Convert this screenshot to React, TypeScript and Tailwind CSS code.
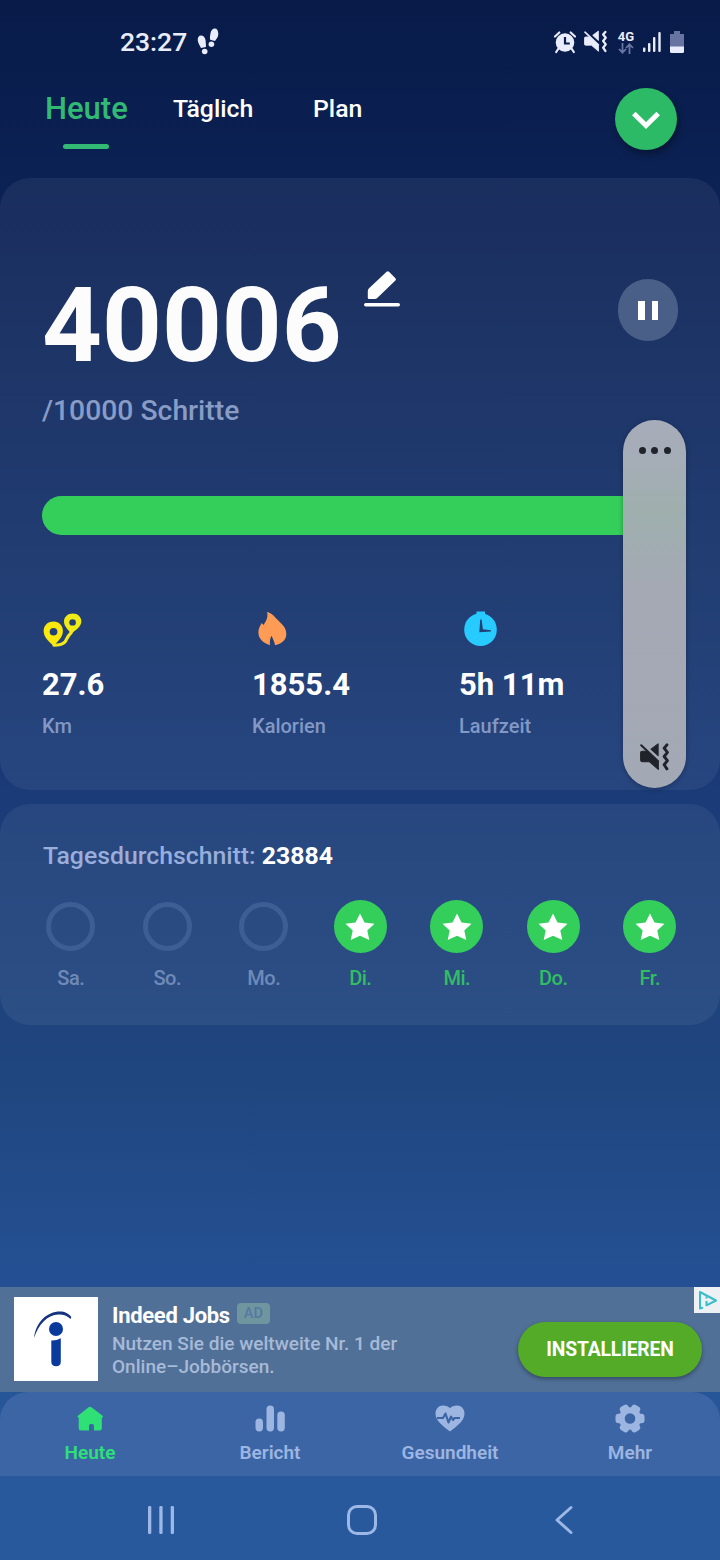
import React from 'react';

const days = [
  { label: 'Sa.', done: false },
  { label: 'So.', done: false },
  { label: 'Mo.', done: false },
  { label: 'Di.', done: true },
  { label: 'Mi.', done: true },
  { label: 'Do.', done: true },
  { label: 'Fr.', done: true },
];

// speaker with slash + vibration line, used in the status bar and the volume panel
const MuteVibrateIcon = ({ className }: { className: string }) => (
  <svg viewBox="0 0 28 27" className={className} fill="currentColor">
    <path d="M17.500 .8v11.400L10.600 6z" stroke="currentColor" strokeLinejoin="round" />
    <path d="M2 8h4.500L17.700 18.500V25.500L9 18H2Q.6 18 .6 16.500v-7Q.6 8 2 8z" stroke="currentColor" strokeLinejoin="round" />
    <path d="M1.200 2.200L17.500 17.500" stroke="currentColor" strokeWidth="2" strokeLinecap="round" />
    <path d="M26 1.800L23.300 5l3.200 4-3.200 4 3.200 4-3.200 4L26 25" fill="none" stroke="currentColor" strokeWidth="2.800" strokeLinecap="round" strokeLinejoin="round" />
  </svg>
);

const RouteIcon = () => (
  <svg width="44" height="40" viewBox="0 0 40 40" preserveAspectRatio="none">
    <path fill="#fbe80d" fillRule="evenodd" d="M10.500 9.500c-5.500 0-9 4.200-9 9.500 0 6.500 5 10.500 9 15 4-4.500 8.500-9 8.500-15 0-5.300-3.500-9.500-8.500-9.500zm0 6.500a3.500 3.800 0 1 1 0 7.600 3.500 3.800 0 0 1 0-7.600z" />
    <path fill="#f0ea16" fillRule="evenodd" d="M28 1.500c-4.500 0-8 3.500-8 8 0 5.500 4.500 8.500 6.500 12.500 4-4 9.300-7 9.300-12.700 0-4.300-3.300-7.800-7.800-7.800zm-.2 5.700a3 3.200 0 1 1 0 6.400 3 3.200 0 0 1 0-6.400z" />
    <path d="M11 33.200c4.500 0 8-1 10-3.500 1.500-2 1.500-5 5.500-9" fill="none" stroke="#f3ea18" strokeWidth="3" strokeLinecap="round" />
  </svg>
);

const FlameIcon = () => (
  <svg width="29" height="36" viewBox="0 0 29 36" fill="#fe9b54">
    <path d="M9.200 .7C15 3 16.800 5.800 19 8.300c1 1.200 2 2 3.200 3.200 3.500 3.300 6.100 6.300 6.100 11.500 0 6-4.300 9.700-11.300 11.300-.2-3.300-2-5.800-3.500-9.500-1.500 3.200-2 5.800-1.500 9.400C5.500 32.200.4 28 .4 21.500c0-3.800 1.500-6.300 3.300-9.500.8 1 1.500 1.500 2.300 1.900C6 11.500 10.500 9 9.200 .7z" />
  </svg>
);

const WatchIcon = () => (
  <svg width="34" height="36" viewBox="0 0 34 36">
    <path fill="#28cbff" d="M12.500 .5h8.500v5h-8.500z" />
    <ellipse cx="16.500" cy="18.700" rx="16.300" ry="16.400" fill="#28cbff" />
    <path fill="#214077" d="M16.200 8.500h1.400l1.300 9.800 8 1v1.200L15.300 21.200z" />
  </svg>
);

const stats = [
  { icon: RouteIcon, value: '27.6', label: 'Km', width: 'w-[210px]', iconPad: 'pt-[1px]' },
  { icon: FlameIcon, value: '1855.4', label: 'Kalorien', width: 'w-[207px]', iconPad: 'pl-[6px]' },
  { icon: WatchIcon, value: '5h 11m', label: 'Laufzeit', width: 'w-[140px]', iconPad: 'pl-[5px]' },
];

const StatusBar = () => (
  <div className="flex h-[84px] items-center pb-px pl-[120px] pr-[35px] text-[#e9edfb]">
    <span className="text-[26.500px] leading-[30px] font-medium">23:27</span>
    <svg width="22" height="28" viewBox="0 0 22 28" className="ml-[10px]" fill="currentColor">
      <path d="M.8 12.500C.4 9.500 1.800 7.500 4 7.500s4.300 1.900 4.600 5c.1 2.800.6 4.400.3 6.400l-4.900 1C2.300 17 1.100 15 .8 12.500z" />
      <ellipse cx="7.700" cy="23.500" rx="2.800" ry="2.700" />
      <path d="M21.300 6C21.300 2.500 20 .5 17.800.5s-4 2-4.400 5.200c-.3 2.300-.8 3.700-.2 6l4.800 1.300c1.700-2.300 3.300-4.300 3.300-7z" />
      <ellipse cx="14.400" cy="16.200" rx="2.800" ry="2.700" />
    </svg>
    <div className="ml-auto flex items-center">
      <svg width="24" height="24" viewBox="0 0 24 24" fill="currentColor">
        <circle cx="12" cy="12.500" r="9.300" />
        <path d="M2 6.500L6.300 2.500M22 6.500l-4.300-4M5.500 18.500L3.200 22M18.500 18.500l2.300 3.500" stroke="currentColor" strokeWidth="2.200" strokeLinecap="round" />
        <path d="M12 7v6.500h4.800" fill="none" stroke="#0a1d4a" strokeWidth="2.200" />
      </svg>
      <MuteVibrateIcon className="ml-[7px] h-[23px] w-[23px]" />
      <div className="ml-[9px] flex w-[20px] flex-col items-center">
        <span className="text-[13px] leading-[13px] font-bold">4G</span>
        <svg width="16" height="11" viewBox="0 0 16 11" fill="none" stroke="#6774a0" strokeWidth="1.800">
          <path d="M4.500 0v9M1 6l3.500 3.700L8 6M11.500 11V2M8 5l3.500-3.700L15 5" />
        </svg>
      </div>
      <svg width="20" height="22" viewBox="0 0 20 22" className="ml-[6px]" fill="currentColor">
        <rect x="1" y="16.500" width="2.400" height="4.500" rx="1" />
        <rect x="6" y="12" width="2.400" height="9" rx="1" />
        <rect x="11" y="6" width="2.400" height="15" rx="1" />
        <rect x="16.300" y="1" width="2.400" height="20" rx="1" />
      </svg>
      <svg width="14" height="22" viewBox="0 0 14 22" className="ml-[8px] mr-px">
        <path fill="#6773a0" d="M4 0h6v3h4v13H0V3h4z" />
        <path fill="#e9edfb" d="M0 15.500h14v5Q14 22 12.500 22h-11Q0 22 0 20.500z" />
      </svg>
    </div>
  </div>
);

const Header = () => (
  <div className="flex h-[94px] items-start pl-[45px] pr-[43px] font-medium text-white">
    <div className="flex w-[128px] flex-col pt-[7px] text-[#32b973]">
      <span className="text-[31px] leading-[36px]">Heute</span>
      <span className="ml-[18px] mt-[17px] h-[5px] w-[46px] rounded-full bg-[#32b973]" />
    </div>
    <span className="w-[140px] pt-[9px] text-[24.800px] leading-[32px]">Täglich</span>
    <span className="pt-[9px] text-[24.800px] leading-[32px]">Plan</span>
    <button className="ml-auto mt-[4px] flex h-[62px] w-[62px] items-center justify-center rounded-full bg-[#2dba66] shadow-[2px_4px_7px_rgba(0,0,0,0.35)]">
      <svg width="30" height="20" viewBox="0 0 30 20" className="mt-[3px]" fill="none" stroke="white" strokeWidth="5">
        <path d="M2.800 2.500L15 14.500L27.200 2.500" />
      </svg>
    </button>
  </div>
);

// system volume slider that lies over the cards
const VolumePanel = () => (
  <div className="absolute left-[623px] top-[420px] flex h-[368px] w-[63px] flex-col items-center justify-between rounded-full bg-[linear-gradient(180deg,#a6acb9_0%,#a5adb7_12%,#9fafad_24%,#a0aeb0_30%,#a4a9b4_44%,#a3a8b5_100%)] pb-[17px] pt-[27px] text-[#20242a] shadow-[0_1px_5px_rgba(0,0,0,0.3)]">
    <div className="flex gap-[5.500px]">
      <span className="h-[7px] w-[7px] rounded-full bg-[#20242a]" />
      <span className="h-[7px] w-[7px] rounded-full bg-[#20242a]" />
      <span className="h-[7px] w-[7px] rounded-full bg-[#20242a]" />
    </div>
    <MuteVibrateIcon className="h-[28px] w-[29px]" />
  </div>
);

const StepsCard = () => (
  <div className="h-[612px] rounded-[30px] bg-white/[0.06] pl-[42px] pr-[42px] pt-[84px]">
    <div className="flex h-[124px] items-start">
      <span className="mt-[4px] text-[104.500px] leading-[120px] font-bold text-[#fcfcfd]">40006</span>
      <svg width="36" height="38" viewBox="0 0 36 38" className="ml-[22px] mt-[8px]" fill="white">
        <path d="M22.600 1.800Q23.800.6 25 1.800l6.400 6.400q1.200 1.200 0 2.400L13.500 27.800Q12.300 29 10.500 29H5q-1.200 0-1.200-1.200V21q0-1.500 1-2.500z" />
        <rect x="0" y="33" width="36" height="3.600" rx="1.800" />
      </svg>
      <button className="ml-auto mt-[17px] flex h-[62px] w-[60px] items-center justify-center gap-[7px] rounded-full bg-[#4a5f87]">
        <span className="h-[19px] w-[6.500px] bg-white" />
        <span className="h-[19px] w-[6.500px] bg-white" />
      </button>
    </div>
    <p className="mt-[8px] text-[28.300px] leading-[34px] font-medium text-[#889cc5]">/10000 Schritte</p>
    <div className="mt-[68px] h-[39px] rounded-full bg-[#34ce5b]" />
    <div className="mt-[76px] flex">
      {stats.map((stat) => (
        <div key={stat.label} className={stat.width}>
          <div className={`h-[38px] ${stat.iconPad}`}>
            <stat.icon />
          </div>
          <p className="mt-[17px] text-[31px] leading-[38px] font-bold whitespace-nowrap text-white">{stat.value}</p>
          <p className="mt-[9px] text-[20px] leading-[26px] font-medium text-[#8298c5]">{stat.label}</p>
        </div>
      ))}
    </div>
  </div>
);

const WeekCard = () => (
  <div className="mt-[14px] h-[221px] rounded-[30px] bg-white/[0.06] pt-[36px]">
    <p className="pl-[43px] text-[24.800px] leading-[32px] font-medium text-[#9aaedb]">
      Tagesdurchschnitt: <span className="font-bold text-white">23884</span>
    </p>
    <div className="mt-[28px] grid grid-cols-7 pl-[22.500px] pr-[22px]">
      {days.map((day) => (
        <div key={day.label} className="flex flex-col items-center">
          <div className="flex h-[53px] items-center">
            {day.done ? (
              <div className="flex h-[53px] w-[53px] items-center justify-center rounded-full bg-[#34ce5b]">
                <svg width="30" height="28" viewBox="0 0 30 28" fill="white">
                  <path d="M15 .5l4.500 9L29.500 10.700l-7.200 6.900L24.300 27l-9.300-4.300L5.700 27l2-9.400L.5 10.700l10-1.200z" />
                </svg>
              </div>
            ) : (
              <div className="h-[49px] w-[49px] rounded-full border-[5px] border-[#3d5e95]" />
            )}
          </div>
          <span className={`mt-[12px] text-[20px] leading-[26px] font-medium tracking-[-0.5px] ${day.done ? 'text-[#32bd65]' : 'text-[#6f8ab8]'}`}>
            {day.label}
          </span>
        </div>
      ))}
    </div>
  </div>
);

const AdBanner = () => (
  <div className="relative flex h-[105px] bg-[#507097] pl-[14px] pr-[18px] pt-[10px]">
    <div className="h-[84px] w-[84px] bg-white">
      <svg width="84" height="84" viewBox="0 0 84 84" fill="#0a3a9b">
        <path d="M20 41C22 25 33 14.500 46 14.500c4.500 0 9 2 11.300 5.500l-.8 2C53 18.500 49 17.300 44.500 17.500 33 18 24.500 27.500 20 41z" fill="#14337f" />
        <circle cx="42" cy="32" r="7" />
        <path d="M37.300 43.500q5 .3 9.500-2.300V64.500q0 4.700-4.700 4.700t-4.800-4.700z" />
      </svg>
    </div>
    <div className="ml-[14px] pt-[4px]">
      <div className="flex h-[30px] items-start">
        <span className="text-[22px] leading-[29px] font-bold tracking-[-0.3px] text-white">Indeed Jobs</span>
        <span className="ml-[7px] mt-[2px] flex h-[21px] w-[33px] items-center justify-center rounded-[4px] bg-[#6f959f] text-[14.500px] font-medium text-[#5379a3]">AD</span>
      </div>
      <p className="mt-[1px] text-[19.050px] leading-[23px] font-medium whitespace-nowrap text-[#a7bad8]">
        Nutzen Sie die weltweite Nr. 1 der
        <br />
        Online–Jobbörsen.
      </p>
    </div>
    <button className="ml-auto mt-[25px] h-[55px] w-[184px] rounded-full bg-[#53ab28] pt-[2px] text-[19.300px] font-bold tracking-[-0.15px] text-white shadow-[0_2px_4px_rgba(0,0,0,0.35)]">
      INSTALLIEREN
    </button>
    <div className="absolute right-0 top-0 h-[26px] w-[26px] bg-[#edf1f3]">
      <svg width="26" height="26" viewBox="0 0 26 26" fill="none" stroke="#39bdc9" strokeWidth="2" strokeLinejoin="round">
        <path d="M9 20.500L6 21.500V5l16 8.500-9.500 4.800V14" />
        <path d="M12.500 9.500v2" />
      </svg>
    </div>
  </div>
);

const BottomNav = () => (
  <div className="grid h-[84px] grid-cols-4 rounded-t-[28px] bg-[#3c65a5] text-[19px] font-semibold text-[#9db5e1]">
    <div className="flex flex-col items-center pt-[12px] text-[#2fe077]">
      <svg width="30" height="30" viewBox="0 0 30 30" fill="currentColor">
        <path d="M13.600 3.300q1.400-1.200 2.800 0L27.600 11.800q1.200 1.400-.8 2.200V24q0 2.500-2.500 2.500h-5.300V22q0-2-1.800-2h-1.400q-1.800 0-1.800 2v4.500H6.200q-2.500 0-2.500-2.500V14Q1.700 13.200 2.900 11.800z" />
      </svg>
      <span className="mt-[6px] leading-[26px]">Heute</span>
    </div>
    <div className="flex flex-col items-center pt-[12px]">
      <svg width="30" height="30" viewBox="0 0 30 30" fill="currentColor">
        <rect x=".5" y="14.500" width="7.500" height="13" rx="3.700" />
        <rect x="11.500" y="1.500" width="7.500" height="26" rx="3.700" />
        <rect x="22.300" y="7.500" width="7.500" height="20" rx="3.700" />
      </svg>
      <span className="mt-[6px] leading-[26px]">Bericht</span>
    </div>
    <div className="flex flex-col items-center pt-[12px]">
      <svg width="30" height="30" viewBox="0 0 30 30" fill="currentColor">
        <path d="M15 27.500C8 22 .5 17 .5 9.500.5 5 3.800 1.500 8 1.500c3 0 5.500.8 7 2.700 1.500-1.900 4-2.700 7-2.700 4.200 0 7.500 3.500 7.500 8C29.500 17 22 22 15 27.500z" />
        <path d="M2 14h6l2.500-4.500 3 9 2.500-6 2 3.500 1.500-2H25" fill="none" stroke="#3c65a5" strokeWidth="2.100" strokeLinejoin="round" />
      </svg>
      <span className="mt-[6px] leading-[26px]">Gesundheit</span>
    </div>
    <div className="flex flex-col items-center pt-[12px]">
      <svg width="30" height="30" viewBox="0 0 30 30" fill="currentColor">
        <circle cx="15" cy="14.500" r="11.200" />
        <rect x=".5" y="9.800" width="29" height="9.400" rx="3" />
        <rect x=".5" y="9.800" width="29" height="9.400" rx="3" transform="rotate(60 15 14.500)" />
        <rect x=".5" y="9.800" width="29" height="9.400" rx="3" transform="rotate(120 15 14.500)" />
        <circle cx="15" cy="14.500" r="5.300" fill="#3c65a5" />
      </svg>
      <span className="mt-[6px] leading-[26px]">Mehr</span>
    </div>
  </div>
);

const SystemNav = () => (
  <div className="flex h-[84px] items-center pl-[146px] pr-[146px] pt-[4px] text-[#9db8e6]">
    <svg width="30" height="30" viewBox="0 0 30 30" fill="currentColor">
      <rect x="2" y="1" width="3.300" height="28" rx="1.200" />
      <rect x="13.300" y="1" width="3.300" height="28" rx="1.200" />
      <rect x="24.700" y="1" width="3.300" height="28" rx="1.200" />
    </svg>
    <svg width="32" height="32" viewBox="0 0 32 32" className="ml-[170px]" fill="none" stroke="currentColor" strokeWidth="3">
      <rect x="2.500" y="2.500" width="27" height="27" rx="8.500" />
    </svg>
    <svg width="20" height="30" viewBox="0 0 20 30" className="ml-auto" fill="none" stroke="currentColor" strokeWidth="3" strokeLinecap="round" strokeLinejoin="round">
      <path d="M17 2.500L3 15l14 12.500" />
    </svg>
  </div>
);

const App = () => {
  return (
    <div className="relative flex h-[1560px] w-[720px] flex-col overflow-hidden bg-[linear-gradient(180deg,#081b49_0px,#0b2153_170px,#1a3b78_797px,#20467f_1080px,#245093_1280px,#28599c_1480px,#28599c_1560px)] font-['Roboto',sans-serif]">
      <StatusBar />
      <Header />
      <StepsCard />
      <WeekCard />
      <div className="mt-auto">
        <AdBanner />
        <BottomNav />
        <SystemNav />
      </div>
      <VolumePanel />
    </div>
  );
};

export default App;
